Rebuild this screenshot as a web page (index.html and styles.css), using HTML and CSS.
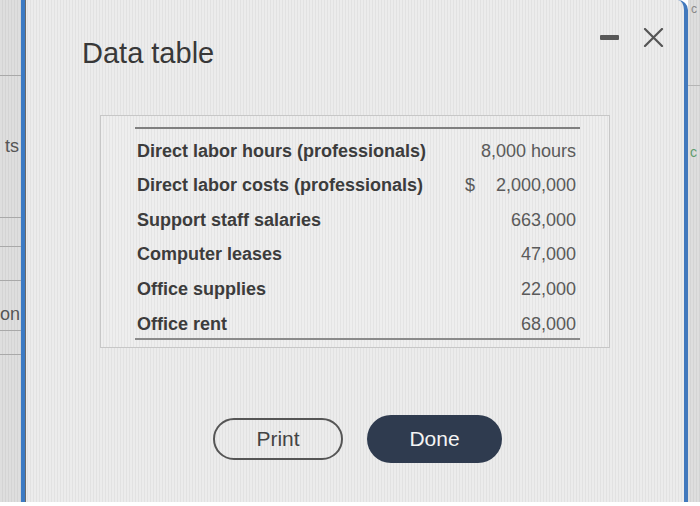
FILE: index.html
```html
<!DOCTYPE html>
<html lang="en">
<head>
<meta charset="utf-8">
<title>Data table</title>
<link rel="stylesheet" href="styles.css">
</head>
<body>
<div class="screen">
  <aside class="side side-left">
    <div class="sl-top"></div>
    <div class="sl-ts"><span class="clip">ts</span></div>
    <div class="sl-row sl-r1"></div>
    <div class="sl-row sl-r2"></div>
    <div class="sl-on"><span class="clip">on</span></div>
    <div class="sl-row sl-r3"></div>
    <div class="sl-rest"></div>
  </aside>

  <section class="dialog">
    <header class="dlg-head">
      <h1 class="dlg-title">Data table</h1>
      <div class="dlg-controls">
        <span class="ctl-min"></span>
        <svg class="ctl-close" width="21" height="19" viewBox="0 0 21 19" aria-label="Close">
          <path d="M2 1 L19 18 M19 1 L2 18" stroke="#555" stroke-width="2.2" stroke-linecap="round" fill="none"/>
        </svg>
      </div>
    </header>

    <div class="tbl-box">
      <div class="tbl">
        <div class="row">
          <span class="lbl">Direct labor hours (professionals)</span>
          <span class="val span2">8,000 hours</span>
        </div>
        <div class="row">
          <span class="lbl">Direct labor costs (professionals)</span>
          <span class="cur">$</span>
          <span class="val">2,000,000</span>
        </div>
        <div class="row">
          <span class="lbl">Support staff salaries</span>
          <span class="cur"></span>
          <span class="val">663,000</span>
        </div>
        <div class="row">
          <span class="lbl">Computer leases</span>
          <span class="cur"></span>
          <span class="val">47,000</span>
        </div>
        <div class="row">
          <span class="lbl">Office supplies</span>
          <span class="cur"></span>
          <span class="val">22,000</span>
        </div>
        <div class="row last">
          <span class="lbl">Office rent</span>
          <span class="cur"></span>
          <span class="val">68,000</span>
        </div>
      </div>
    </div>

    <div class="actions">
      <button class="btn btn-print">Print</button>
      <button class="btn btn-done">Done</button>
    </div>
  </section>

  <aside class="side side-right">
    <div class="sr-top"><span class="sr-c">c</span></div>
    <div class="sr-mid"><span class="sr-ac">c</span></div>
  </aside>
</div>
</body>
</html>
```

FILE: styles.css
```css
* { box-sizing: border-box; }

html, body {
  margin: 0;
  padding: 0;
  background: #ffffff;
}

body {
  width: 700px;
  height: 506px;
  overflow: hidden;
  font-family: "Liberation Sans", Arial, sans-serif;
}

.screen {
  display: flex;
  width: 700px;
  height: 502px;
}

/* background page strips */
.side {
  background: repeating-linear-gradient(90deg, #dedede 0 2px, #d4d4d4 2px 3px);
  overflow: hidden;
  color: #555;
}

.side-left {
  width: 21px;
  flex: none;
  display: flex;
  flex-direction: column;
}

.sl-top {
  height: 76px;
  border-bottom: 1px solid #a9a9a9;
}

.sl-ts {
  height: 142px;
  border-bottom: 1px solid #a9a9a9;
  padding-top: 58px;
  text-align: right;
}

.clip {
  display: block;
  font-size: 18px;
  line-height: 24px;
  padding-right: 2px;
  white-space: nowrap;
}

.sl-row { height: 30px; border-bottom: 1px solid #a9a9a9; }
.sl-r1 { height: 29px; }
.sl-r2 { height: 34px; }

.sl-on {
  height: 50px;
  border-bottom: 1px solid #a9a9a9;
  padding-top: 21px;
  text-align: right;
}

.sl-r3 { height: 24px; }
.sl-rest { flex: 1; }

.side-right {
  width: 12px;
  flex: none;
  display: flex;
  flex-direction: column;
}

.sr-top {
  height: 86px;
  border-bottom: 1px solid #b5b5b5;
  padding: 2px 0 0 3px;
}

.sr-c {
  display: block;
  font-size: 12px;
  line-height: 14px;
  color: #888;
}

.sr-mid {
  padding-top: 56px;
  padding-left: 2px;
}

.sr-ac {
  font-size: 14px;
  line-height: 20px;
  color: #5f9c6c;
}

/* dialog */
.dialog {
  flex: 1;
  display: flex;
  flex-direction: column;
  background: repeating-linear-gradient(90deg, #ececec 0 2px, #e2e2e2 2px 3px);
  border-left: 4px solid #3d7bc4;
  border-right: 4px solid #4279bd;
  border-top-right-radius: 10px;
  box-shadow: inset 1px 0 0 #6a6a6a;
}

.dlg-head {
  display: flex;
  justify-content: space-between;
  align-items: flex-start;
  padding: 28px 20px 0 57px;
}

.dlg-title {
  margin: 9px 0 0;
  font-size: 29px;
  line-height: 32px;
  font-weight: normal;
  color: #383838;
}

.dlg-controls {
  display: flex;
  align-items: center;
  gap: 24px;
  height: 19px;
}

.ctl-min {
  width: 19px;
  height: 5px;
  border-radius: 1px;
  background: #585858;
}

.ctl-close { display: block; }

/* table */
.tbl-box {
  margin: 46px 0 0 75px;
  width: 510px;
  border: 1px solid #c7c7c7;
  padding: 11px 29px 7px 34px;
  background: repeating-linear-gradient(90deg, #eeeeee 0 2px, #e4e4e4 2px 3px);
}

.tbl {
  border-top: 2px solid #808080;
  padding-top: 4.7px;
}

.row {
  display: grid;
  grid-template-columns: 1fr 31px 80px;
  height: 34.6px;
  line-height: 34.6px;
  font-size: 18px;
  padding: 0 4px 0 2px;
}

.row.last {
  height: 33px;
  border-bottom: 2px solid #8a8a8a;
}

.lbl {
  font-weight: bold;
  color: #3c3c3c;
  white-space: nowrap;
}

.cur {
  color: #5a5a5a;
}

.val {
  text-align: right;
  color: #5a5a5a;
  white-space: nowrap;
}

.val.span2 { grid-column: 2 / 4; }

/* buttons */
.actions {
  display: flex;
  align-items: center;
  gap: 24px;
  margin-top: 67px;
  padding-left: 188px;
}

.btn {
  font-family: "Liberation Sans", Arial, sans-serif;
  font-size: 21px;
  padding: 0;
  cursor: pointer;
}

.btn-print {
  width: 130px;
  height: 42px;
  border: 2px solid #555;
  border-radius: 21px;
  background: transparent;
  color: #444;
}

.btn-done {
  width: 135px;
  height: 48px;
  border: none;
  border-radius: 24px;
  background: #2f3b4f;
  color: #f4f4f4;
}
```
